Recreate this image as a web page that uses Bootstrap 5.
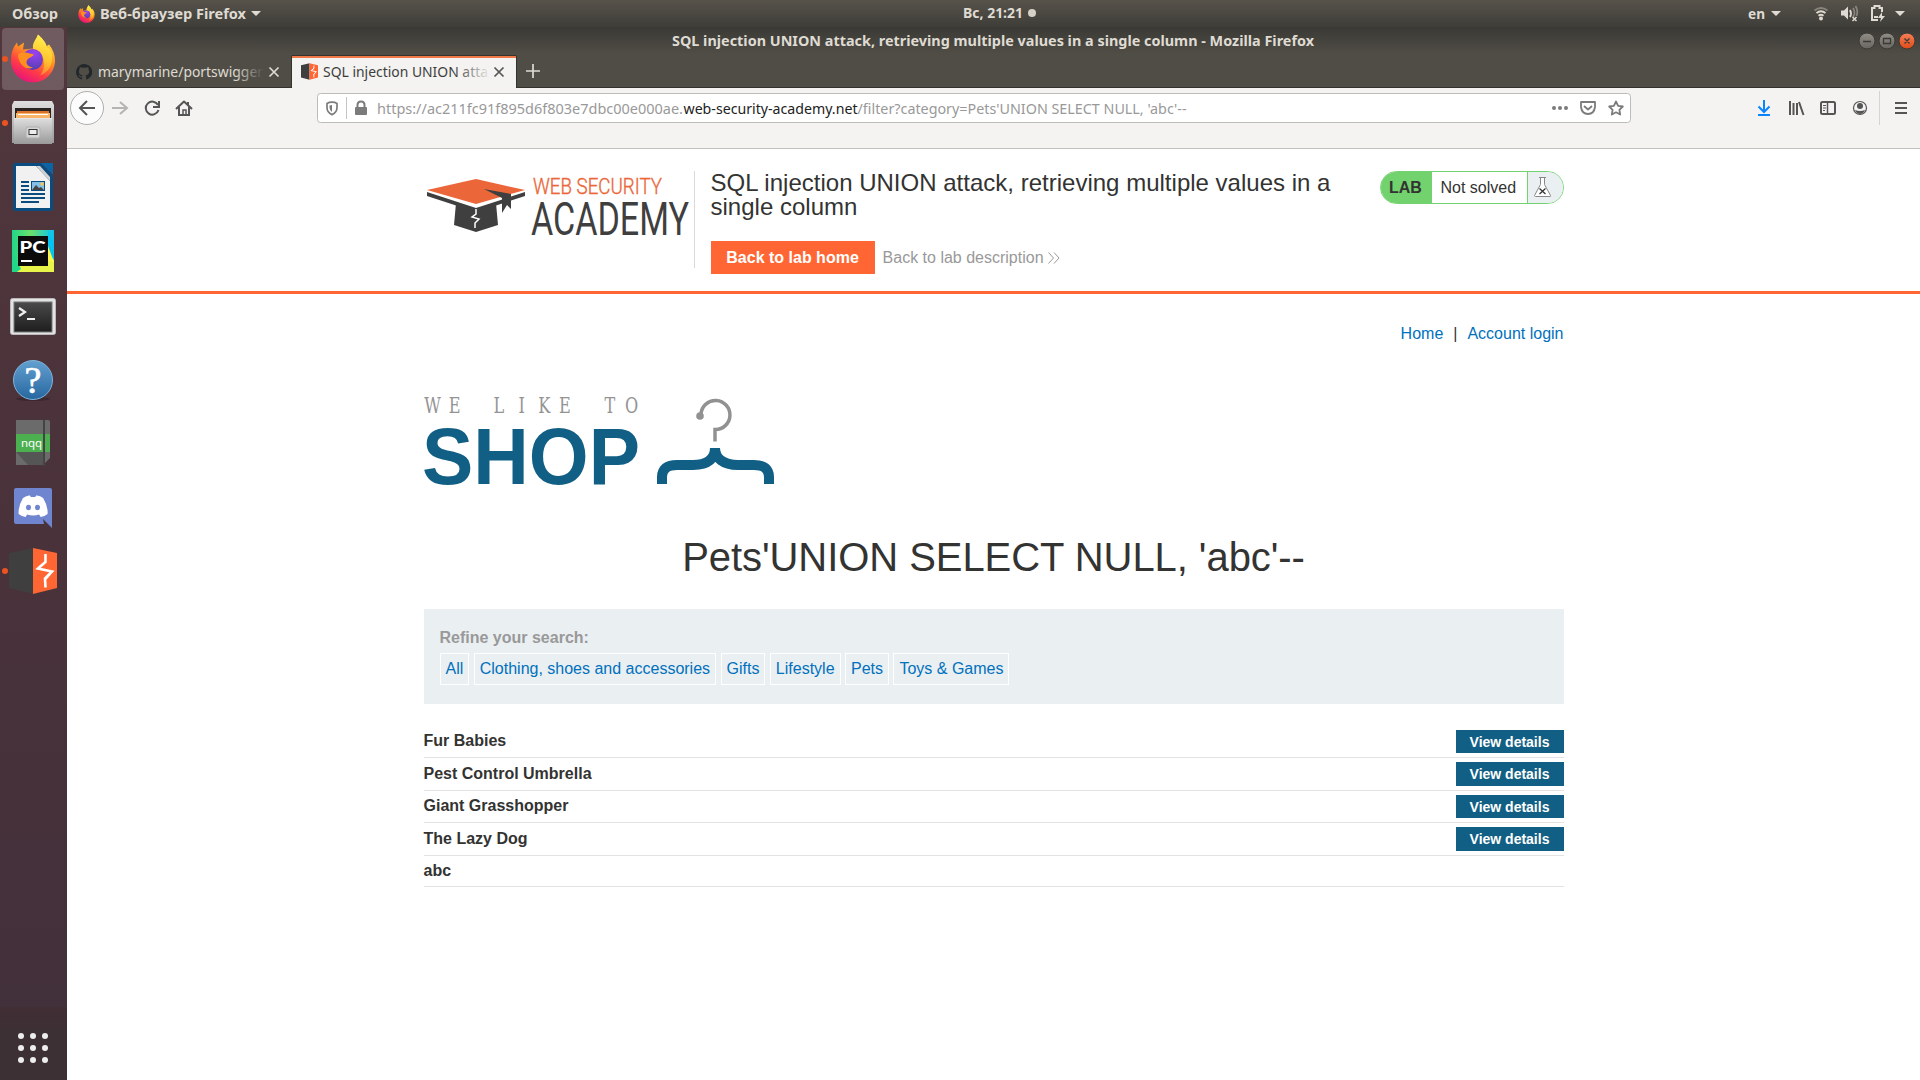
<!DOCTYPE html>
<html lang="ru">
<head>
<meta charset="utf-8">
<title>SQL injection UNION attack, retrieving multiple values in a single column</title>
<link href="https://cdn.jsdelivr.net/npm/bootstrap@5.3.0/dist/css/bootstrap.min.css" rel="stylesheet">
<style>
  html, body { height: 100%; }
  body { font-family: "Liberation Sans", Arial, sans-serif; font-size: 16px; color: #333332; background: #fff; overflow: hidden; }
  svg { display: block; flex: none; overflow: visible; }
  svg text { white-space: pre; }
  .ui-font { font-family: "Noto Sans", "Open Sans", sans-serif; }
  .desktop { height: 1080px; width: 1920px; }
  .top-panel { height: 27px; background: linear-gradient(#57534b, #3e3d38); }
  .dock { width: 67px; background: linear-gradient(#51373d 0, #4a323a 500px, #42303a 980px, #402e33 981px, #3c3034 1005px, #3c3034 100%); }
  .title-strip { height: 61px; background: linear-gradient(#3a3935, #504d46 27px, #504d46); border-bottom: 1px solid #33322e; }
  .tool-strip { height: 61px; background: #f4f3f1; border-bottom: 1px solid #c3c1be; }
  .lab-header { height: 145px; border-bottom: 3px solid #ff6633; }
  .lab-header .shell { padding-top: 22px; }
  .shell { width: 1140px; margin: 0 auto; }
  .lab-rule { width: 1px; height: 97px; background: #d9d9d9; }
  .lab-title { font-size: 24px; line-height: 24px; width: 640px; letter-spacing: .01px; }
  .lab-actions { margin-top: 22px; }
  .btn-lab { background: #ff6633; color: #fff; font-weight: 700; line-height: 17px; padding: 8px 15.800px; border: 0; border-radius: 0; }
  .btn-lab:hover { background: #e9551f; color: #fff; }
  .lab-desc { color: #999; line-height: 33px; }
  .lab-pill { height: 33px; width: 184px; border: 1px solid #72d26d; border-radius: 17px; overflow: hidden; line-height: 32px; }
  .pill-key { background: #72d26d; width: 51px; font-weight: 700; padding-left: 8.500px; }
  .pill-state { width: 95px; padding-left: 9px; }
  .pill-icon { background: #eaeff2; border-left: 1px solid #72d26d; width: 36px; padding: 5px 0 0 5px; }
  .blue-link, .blue-link:hover { color: #0071bd; text-decoration: none; }
  .top-links { padding-top: 29px; line-height: 22px; gap: 10px; }
  .shop-logo { margin-top: 50px; }
  .page-heading { font-size: 40px; line-height: 48px; font-weight: 400; letter-spacing: -.06px; margin: 46px 0 28px; }
  .filter-box { height: 95px; background: #eaeff2; padding: 19px 16px 0; }
  .filter-label { color: #999; font-weight: 700; line-height: 19px; }
  .chips { margin-top: 6px; gap: 4.450px; }
  .chip-link { border: 1px solid #fff; padding: 0 5px; height: 32px; line-height: 30px; }
  .items { margin-top: 21.600px; }
  .item-row { height: 32.500px; align-items: center; border-bottom: 1px solid #e2e2e2; font-weight: 700; line-height: 20px; }
  .item-last { height: 31.500px; }
  .btn-view { background: #115f84; color: #fff; font-size: 14px; font-weight: 700; width: 108px; height: 23.500px; padding: 0; line-height: 24px; border: 0; border-radius: 0; }
  .btn-view:hover { background: #0a4d6d; color: #fff; }
</style>
<script src="https://cdn.jsdelivr.net/npm/bootstrap@5.3.0/dist/js/bootstrap.bundle.min.js"></script>
</head>
<body>
<div class="desktop d-flex flex-column">

  <!-- system panel -->
  <header class="top-panel flex-shrink-0">
    <svg class="ui-font" width="1920" height="27" fill="#dfdbd2" font-size="13.5" font-weight="700">
      <defs>
        <linearGradient id="fx" x1=".8" y1="0" x2=".3" y2="1"><stop offset="0" stop-color="#fff44f"/><stop offset=".4" stop-color="#ff9a1f"/><stop offset=".72" stop-color="#ff3b47"/><stop offset="1" stop-color="#e5127f"/></linearGradient>
        <linearGradient id="fxy" x1=".6" y1="0" x2=".4" y2="1"><stop offset="0" stop-color="#fff44f"/><stop offset=".6" stop-color="#ffc22e"/><stop offset="1" stop-color="#ff7a33"/></linearGradient>
        <radialGradient id="fxp" cx=".6" cy=".2" r=".9"><stop offset="0" stop-color="#9b41f5"/><stop offset="1" stop-color="#4c3fa8"/></radialGradient>
        <symbol id="firefox" viewBox="0 0 46 48">
          <path d="M1 26C1 18 3 13 7 8l1 4 6-4-1 7 10-1 5-14c3 3 6 5 8 12l3-2c4 5 6 10 6 16 0 12-10 22-22 22S1 38 1 26z" fill="url(#fx)"/>
          <path d="M23 14C22 8 27 4 28 0c3 3 8 7 9 13 2 0 5 4 5 8 1 10-4 17-12 20 5-6 5-14 2-20-2-4-6-6-9-7z" fill="url(#fxy)"/>
          <circle cx="22.500" cy="25" r="10.500" fill="url(#fxp)"/>
          <path d="M8 20c3-3 9-2 12-1l4 1c-2 3-6 3-7 6-2 3 2 7 6 7-7 4-15-4-15-13z" fill="#ff8f1f"/>
        </symbol>
        <symbol id="burp" viewBox="0 0 48 46"><path d="M0 5 24 0v46L0 40z" fill="#3f3f3f"/><path d="M24 0l24 5v35l-24 6z" fill="#ff6633"/><path d="M36.500 6v8l-7.500 6.500 14 3-7 7 .5 9M29 20.500l8-7M43 23.500l-7 8" fill="none" stroke="#fff" stroke-width="2.600"/></symbol>
      </defs>
      <text x="12" y="19" textLength="46" lengthAdjust="spacingAndGlyphs">Обзор</text>
      <use href="#firefox" x="78" y="5" width="17" height="18"/>
      <text x="100" y="19" textLength="146" lengthAdjust="spacingAndGlyphs">Веб-браузер Firefox</text>
      <path d="M251 11h10l-5 5zM1771 11h10l-5 5zM1895 11h10l-5 5z"/>
      <text x="963" y="18" textLength="60" lengthAdjust="spacingAndGlyphs">Вс, 21:21</text>
      <circle cx="1032" cy="13" r="4" fill="#d5d1c9"/>
      <text x="1748" y="19" textLength="17" lengthAdjust="spacingAndGlyphs">en</text>
      <g fill="none" stroke="#dfdbd2" stroke-width="1.8"><path d="M1814.500 10.500q6.500-5 13 0" opacity=".4"/><path d="M1816.500 13q4.500-3.500 9 0M1818.500 15.700q2.500-2 5 0"/><path d="M1850 10q2 3.500 0 7" /><path d="M1853 8q3 5 0 9M1855.500 6q3 5 1 10" opacity=".4"/><path d="M1852.500 17l4 4m0-4l-4 4" stroke-width="1.500"/>
      <path d="M1878 20h-6V8h2.500V6h5v2h2.500v4" stroke-width="2"/></g>
      <circle cx="1821" cy="18.500" r="2"/><path d="M1841 10.500h3l4-4v13l-4-4h-3zM1882 12l-4 6h3l-1 4 5-6h-3zM1874 16h4v2h-4z"/>
    </svg>
  </header>

  <div class="d-flex flex-grow-1">
    <!-- launcher -->
    <nav class="dock flex-shrink-0">
      <svg width="67" height="1053" viewBox="0 27 67 1053">
        <defs>
          <linearGradient id="metal" x1="0" y1="0" x2="0" y2="1"><stop offset="0" stop-color="#dedede"/><stop offset="1" stop-color="#9a9a9a"/></linearGradient>
          <linearGradient id="pyc"><stop offset="0" stop-color="#21d789"/><stop offset=".45" stop-color="#6be06a"/><stop offset="1" stop-color="#07c3f2"/></linearGradient>
          <linearGradient id="term" x1="0" y1="0" x2="0" y2="1"><stop offset="0" stop-color="#4a4a4a"/><stop offset="1" stop-color="#1e1e1e"/></linearGradient>
          <linearGradient id="helpg" x1="0" y1="0" x2="0" y2="1"><stop offset="0" stop-color="#63a0d0"/><stop offset="1" stop-color="#2767a0"/></linearGradient>
        </defs>
        <rect x="2" y="28" width="62" height="62" rx="4" fill="#fff" opacity=".18"/>
        <g fill="#e95420"><circle cx="5" cy="59" r="3"/><circle cx="5" cy="123" r="3"/><circle cx="5" cy="571" r="3"/></g>
        <use href="#firefox" x="10" y="34.500" width="46" height="48"/>
        <!-- files -->
        <path d="M14 101h38l2 4v38H12v-38z" fill="url(#metal)"/><rect x="15" y="108" width="36" height="13" fill="#292421"/><path d="M17 111h32v9H17z" fill="#d9702b"/><path d="M16 113h34v6H16z" fill="#f8b468"/><path d="M18 114h30v1H18z" fill="#fff"/>
        <path d="M14 118h38v26H14z" fill="url(#metal)"/><path d="M14 118.500h38" stroke="#e6e6e6"/><rect x="26" y="127" width="14" height="11" rx="2" fill="#d5d5d5" stroke="#b0b0b0"/><rect x="29" y="129.500" width="8" height="5" fill="#eee" stroke="#333"/>
        <!-- writer -->
        <path d="M15 163h26l12 13v33q0 2-2 2H15q-2 0-2-2v-44q0-2 2-2z" fill="#0b4c80"/><path d="M41 163h12v12z" fill="#0b65a5"/><path d="M16 166h20l14 15v27H16z" fill="#f1f1f1"/><path d="M36 166l14 15v-4l-10-11z" fill="#d2d2d2"/>
        <path d="M21 182h8M21 186h8M21 190h8M21 194h24M21 198h24M21 202h18" stroke="#0b4c80" stroke-width="2"/><rect x="31.500" y="181.500" width="13" height="9" fill="#85bfe8" stroke="#0b4c80"/><path d="M32 190l4-5 3 3 2-1 3 3z" fill="#444"/><circle cx="42" cy="184" r="1.700" fill="#f1c84c"/>
        <!-- pycharm -->
        <rect x="12" y="230" width="42" height="42" fill="url(#pyc)"/><path d="M12 272l8-14 28-5 6 6v13z" fill="#e9f44a"/><path d="M48 230l6 14v16l-6-6z" fill="#07c3f2"/><path d="M48 246l6 16-6-1z" fill="#fcf84a"/><path d="M12 251l9 18-4 3h-5z" fill="#21d789"/><rect x="18" y="236" width="30" height="30" fill="#0b0b0b"/>
        <text x="19.500" y="252.500" font-family="Lato" font-weight="900" font-size="17" fill="#fff" textLength="26" lengthAdjust="spacingAndGlyphs">PC</text><path d="M21 260h11v2H21z" fill="#fff"/>
        <!-- terminal -->
        <rect x="10.500" y="298.500" width="45" height="36" rx="2" fill="#e3e3e3" stroke="#b9b9b9"/><rect x="14" y="302" width="38" height="30" fill="url(#term)" stroke="#777"/><path d="M19 308l6 4-6 4" fill="none" stroke="#eee" stroke-width="2.200"/><path d="M27 318h8v2h-8z" fill="#eee"/>
        <!-- help -->
        <ellipse cx="33" cy="399" rx="17" ry="2" opacity=".2"/><circle cx="33" cy="380" r="19.500" fill="url(#helpg)" stroke="#7fb3da"/><text x="33" y="393" text-anchor="middle" font-family="Liberation Serif" font-size="38" fill="#fff" stroke="#fff" stroke-width=".7">?</text>
        <!-- notepadqq -->
        <path d="M16 420h32q2 0 2 2v36l-7 7H16z" fill="#6b6b6b"/><path d="M16 452h28v13H28z" fill="#555"/><path d="M16 434h34v18H16z" fill="#4caf50"/><path d="M44 420v46" stroke="#444" stroke-width="2"/><text x="21" y="447" font-family="Noto Sans" font-size="11.500" fill="#fff" textLength="21">nqq</text>
        <!-- discord -->
        <path d="M16 488h34q2 0 2 2v38l-9-9 1 5H16q-2 0-2-2v-32q0-2 2-2z" fill="#7085cf"/><path d="M23 498q4-3 7-2.500l.8 1.500h4.500l.8-1.500q4-.3 7 2.500 5 8 4.500 16-3 2.500-7 3l-1.500-2.500q-6 2-12 0l-1.500 2.500q-4-.5-7-3-.500-8 4.400-16z" fill="#fff"/><ellipse cx="28.500" cy="507.500" rx="2.500" ry="2.700" fill="#7085cf"/><ellipse cx="37.500" cy="507.500" rx="2.500" ry="2.700" fill="#7085cf"/>
        <!-- burp -->
        <use href="#burp" x="9" y="548" width="48" height="46"/>
        <g fill="#eee"><circle cx="21" cy="1036" r="3"/><circle cx="33" cy="1036" r="3"/><circle cx="45" cy="1036" r="3"/><circle cx="21" cy="1048" r="3"/><circle cx="33" cy="1048" r="3"/><circle cx="45" cy="1048" r="3"/><circle cx="21" cy="1060" r="3"/><circle cx="33" cy="1060" r="3"/><circle cx="45" cy="1060" r="3"/></g>
      </svg>
    </nav>

    <!-- browser window -->
    <div class="flex-grow-1 d-flex flex-column">
      <div class="title-strip flex-shrink-0">
        <svg class="ui-font" width="1853" height="61" viewBox="67 27 1853 61" font-size="14">
          <defs>
            <linearGradient id="fadeA" gradientUnits="userSpaceOnUse" x1="235" x2="264" y1="0" y2="0"><stop offset="0" stop-color="#dfdbd2"/><stop offset="1" stop-color="#dfdbd2" stop-opacity="0"/></linearGradient>
            <linearGradient id="fadeB" gradientUnits="userSpaceOnUse" x1="455" x2="491" y1="0" y2="0"><stop offset="0" stop-color="#3c3c3c"/><stop offset="1" stop-color="#3c3c3c" stop-opacity="0"/></linearGradient>
            <linearGradient id="wbtn" x1="0" y1="0" x2="0" y2="1"><stop offset="0" stop-color="#918e87"/><stop offset="1" stop-color="#676560"/></linearGradient>
            <linearGradient id="wcls" x1="0" y1="0" x2="0" y2="1"><stop offset="0" stop-color="#f68058"/><stop offset="1" stop-color="#df4a16"/></linearGradient>
          </defs>
          <text x="672" y="46" font-size="13.500" font-weight="700" fill="#dfdbd2" textLength="642" lengthAdjust="spacingAndGlyphs">SQL injection UNION attack, retrieving multiple values in a single column - Mozilla Firefox</text>
          <g stroke="#3a3935"><circle cx="1867" cy="41" r="8" fill="url(#wbtn)"/><circle cx="1887" cy="41" r="8" fill="url(#wbtn)"/><circle cx="1907" cy="41" r="8" fill="url(#wcls)"/><path d="M1863 41.500h8M1883.500 38.500h7v5h-7zM1904.500 38.500l5 5m0-5l-5 5" fill="none" stroke-width="1.300"/></g>
          <path d="M84 64a8 8 0 0 0-2.500 15.600c.4 0 .6-.2.6-.5v-1.600c-2.200.5-2.700-1-2.700-1-.4-.9-.9-1.200-.9-1.200-.7-.5 0-.5 0-.5.800 0 1.300.8 1.300.8.700 1.300 1.900.9 2.300.7 0-.5.300-.9.500-1.100-1.800-.2-3.700-.9-3.700-4 0-.9.400-1.600.9-2.100-.1-.3-.4-1.100 0-2.200 0 0 .700-.2 2.300.8a8 8 0 0 1 4 0c1.500-1 2.200-.8 2.200-.8.400 1.100.2 1.900 0 2.200.5.500.900 1.200.900 2.100 0 3.100-1.900 3.800-3.700 4 .3.300.600.800.600 1.500v2.400c0 .3.200.5.600.5A8 8 0 0 0 84 64z" fill="#22272c"/>
          <text x="98" y="76.500" textLength="165" lengthAdjust="spacingAndGlyphs" fill="url(#fadeA)">marymarine/portswigger</text>
          <path d="M269.500 67.500l9 9m0-9l-9 9" stroke="#dfdbd2" stroke-width="1.700"/>
          <path d="M291.500 89V55.500h225V89" fill="#f4f3f1" stroke="#33322e"/><path d="M292 56h224v2H292z" fill="#f07746"/>
          <use href="#burp" x="301" y="63" width="17" height="17"/>
          <text x="323" y="76.500" textLength="165" lengthAdjust="spacingAndGlyphs" fill="url(#fadeB)">SQL injection UNION atta</text>
          <path d="M494.500 67.500l9 9m0-9l-9 9" stroke="#555" stroke-width="1.700"/>
          <path d="M526 71h14M533 64v14" stroke="#dfdbd2" stroke-width="1.700"/>
        </svg>
      </div>
      <div class="tool-strip flex-shrink-0">
        <svg class="ui-font" width="1853" height="60" viewBox="67 88 1853 60" font-size="14">
          <circle cx="87" cy="108" r="16.500" fill="#fcfcfc" stroke="#b0aeab"/>
          <g fill="none" stroke="#555" stroke-width="2"><path d="M95 108H80m7-7l-7 7 7 7"/><path d="M112 108h15m-7-6l7 6-7 6" stroke="#b5b4b2"/><path d="M158 105a6.500 6.500 0 1 0 .5 5M159 101v6h-6"/><path d="M176 109l8-7.500 8 7.500" stroke-linejoin="round"/><path d="M179 107v8h10v-8M188 102v3"/><path d="M183 115v-5h3v5" stroke-width="1.500"/></g>
          <rect x="317.500" y="93.500" width="1313" height="29" rx="3" fill="#fff" stroke="#bebcb9"/>
          <path d="M346.500 97v22" stroke="#c5c5c5"/>
          <path d="M332 102.200q3 0 5 1.200v4q0 5-5 7.200-5-2.200-5-7.200v-4q2-1.200 5-1.200z" fill="none" stroke="#7b7b7b" stroke-width="1.700"/><path d="M332 105v7q-2.500-1.500-2.500-4.500v-2z" fill="#7b7b7b"/>
          <rect x="355" y="107" width="12" height="8" rx="1" fill="#7b7b7b"/><path d="M357.500 108v-3q0-3.500 3.500-3.500t3.500 3.500v3" fill="none" stroke="#7b7b7b" stroke-width="2"/>
          <text x="377" y="113.500" fill="#999" textLength="306" lengthAdjust="spacingAndGlyphs">https://ac211fc91f895d6f803e7dbc00e000ae.</text>
          <text x="683.500" y="113.500" fill="#222" textLength="174" lengthAdjust="spacingAndGlyphs">web-security-academy.net</text>
          <text x="857.500" y="113.500" fill="#999" textLength="329" lengthAdjust="spacingAndGlyphs">/filter?category=Pets'UNION SELECT NULL, 'abc'--</text>
          <g fill="#7b7b7b"><circle cx="1554" cy="108" r="2"/><circle cx="1560" cy="108" r="2"/><circle cx="1566" cy="108" r="2"/></g>
          <g fill="none" stroke="#7b7b7b" stroke-width="1.800" stroke-linejoin="round"><path d="M1581 102h14v5q-1 7-7 7t-7-7z"/><path d="M1584 106l4 3.500 4-3.500"/><path d="M1616 101.500l2.100 4.300 4.700.7-3.400 3.300.8 4.700-4.200-2.200-4.200 2.200.8-4.700-3.400-3.300 4.700-.7z"/></g>
          <path d="M1764 100v12m-5.500-5.500l5.500 5.500 5.500-5.500M1758 115h12" fill="none" stroke="#0a84ff" stroke-width="2"/>
          <g fill="none" stroke="#555" stroke-width="2"><path d="M1790 101v14M1793.500 103v12M1797 103v12M1799 102l4.500 13"/><rect x="1821" y="102" width="14" height="12" rx="1.500"/><path d="M1827.500 102v12" stroke-width="1.500"/><path d="M1823 105.500h3M1823 108h3M1823 110.500h2" stroke-width="1"/><circle cx="1860" cy="108" r="6.500" stroke-width="1.200"/><path d="M1895 103h12M1895 108h12M1895 113h12"/></g>
          <circle cx="1860" cy="106" r="3" fill="#555"/><path d="M1855 110q5 2 10 0-1.500 4-5 4t-5-4z" fill="#555"/>
          <path d="M1879.500 91v34" stroke="#d5d4d2"/>
        </svg>
      </div>

      <!-- page -->
      <main>
        <section class="lab-header">
          <div class="shell d-flex align-items-start">
            <svg width="270" height="80" viewBox="424 171 270 80">
              <path d="M427 192l49 16 49-16v4l-49 16-49-16z" fill="#3f3f3f"/><path d="M427 190l49-11 49 11-49 14z" fill="#eb6739"/><path d="M484 189l27 5v15l-4-4-5 8V198z" fill="#3f3f3f"/>
              <path d="M456 203l20 6 20-6 2 22-22 7-22-7z" fill="#3f3f3f"/><path d="M476 209v5l-4 3 7 2-4 4v5" fill="none" stroke="#fff" stroke-width="1.500"/>
              <text x="533" y="194" font-family="Roboto" font-weight="300" font-size="22.500" fill="#eb6739" stroke="#eb6739" stroke-width=".4" textLength="129" lengthAdjust="spacingAndGlyphs">WEB SECURITY</text>
              <text x="531" y="235" font-family="Roboto" font-size="46" fill="#3f3f3f" textLength="158" lengthAdjust="spacingAndGlyphs">ACADEMY</text>
            </svg>
            <div class="lab-rule"></div>
            <div class="ms-3">
              <h2 class="lab-title mb-0">SQL injection UNION attack, retrieving multiple values in a single column</h2>
              <div class="lab-actions d-flex gap-2">
                <a class="btn btn-lab" href="#">Back to lab home</a>
                <a class="lab-desc text-decoration-none d-flex align-items-center gap-1" href="#">Back to lab description
                  <svg width="12" height="12" fill="none" stroke="#999"><path d="M.5.500l5 5.500-5 5.500M6 .5l5 5.500-5 5.500"/></svg></a>
              </div>
            </div>
            <div class="lab-pill ms-auto d-flex">
              <span class="pill-key">LAB</span><span class="pill-state">Not solved</span>
              <span class="pill-icon"><svg width="20" height="22" fill="#fff" stroke="#888"><path d="M6 .500h7M7.500.500v7L1.500 18.500q0 1 1 1h14.500q1 0 .5-1L11.500 7.500v-7"/><path d="M6.500 11.500l6 5.500m0-5.500l-6 5.500" stroke="#333" stroke-width="1.300"/></svg></span>
            </div>
          </div>
        </section>

        <section class="shell">
          <nav class="top-links d-flex justify-content-end"><a class="blue-link" href="#">Home</a><span>|</span><a class="blue-link" href="#">Account login</a></nav>
          <svg class="shop-logo" width="352" height="92" viewBox="424 395 352 92">
            <text transform="scale(.75 1)" x="576.700 606.300 636 665.300 695.600 725.600 753.300 783 813.300 842" y="413" text-anchor="middle" font-family="DejaVu Serif" font-size="21.500" fill="#949494">WE LIKE TO</text>
            <text x="422" y="484" font-weight="700" font-size="79" fill="#115f84" textLength="218" lengthAdjust="spacingAndGlyphs">SHOP</text>
            <path d="M701 414a14.500 14.500 0 1 1 14 15.500v12" fill="none" stroke="#919191" stroke-width="3.500"/><circle cx="700" cy="416" r="3.800" fill="#919191"/>
            <path d="M662 484v-7q0-12 15-12h16c16 0 22-7 22-17 0 10 8 17 23 17h16q15 0 15 12v7" fill="none" stroke="#115f84" stroke-width="10"/>
          </svg>
          <h1 class="page-heading text-center">Pets'UNION SELECT NULL, 'abc'--</h1>
          <div class="filter-box">
            <div class="filter-label">Refine your search:</div>
            <div class="chips d-flex">
              <a class="blue-link chip-link" href="#">All</a><a class="blue-link chip-link" href="#">Clothing, shoes and accessories</a><a class="blue-link chip-link" href="#">Gifts</a><a class="blue-link chip-link" href="#">Lifestyle</a><a class="blue-link chip-link" href="#">Pets</a><a class="blue-link chip-link" href="#">Toys &amp; Games</a>
            </div>
          </div>
          <div class="items">
            <div class="item-row d-flex justify-content-between">Fur Babies<a class="btn btn-view" href="#">View details</a></div>
            <div class="item-row d-flex justify-content-between">Pest Control Umbrella<a class="btn btn-view" href="#">View details</a></div>
            <div class="item-row d-flex justify-content-between">Giant Grasshopper<a class="btn btn-view" href="#">View details</a></div>
            <div class="item-row d-flex justify-content-between">The Lazy Dog<a class="btn btn-view" href="#">View details</a></div>
            <div class="item-row item-last d-flex">abc</div>
          </div>
        </section>
      </main>
    </div>
  </div>
</div>
</body>
</html>
